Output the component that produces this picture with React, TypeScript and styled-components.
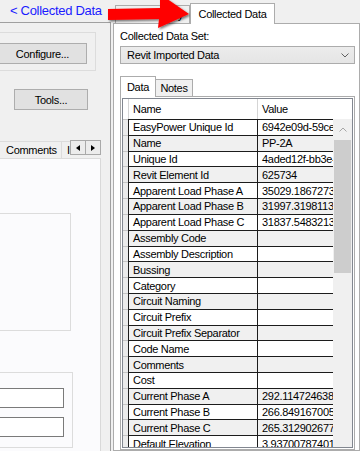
import styled, { createGlobalStyle } from "styled-components";

const GlobalStyle = createGlobalStyle`
  html, body {
    margin: 0;
    padding: 0;
    background: #f0f0f0;
  }
  body {
    font-family: "Liberation Sans", Arial, sans-serif;
    font-size: 11px;
    letter-spacing: -0.3px;
    color: #000;
  }
  * {
    box-sizing: border-box;
  }
`;

const rows: [string, string][] = [
  ["EasyPower Unique Id", "6942e09d-59ce-4a77-b3c1-2f0d5e8c9a11"],
  ["Name", "PP-2A"],
  ["Unique Id", "4aded12f-bb3e-4f07-9c2e-71d0a6e5b3c4"],
  ["Revit Element Id", "625734"],
  ["Apparent Load Phase A", "35029.1867273451"],
  ["Apparent Load Phase B", "31997.3198113207"],
  ["Apparent Load Phase C", "31837.5483213493"],
  ["Assembly Code", ""],
  ["Assembly Description", ""],
  ["Bussing", ""],
  ["Category", ""],
  ["Circuit Naming", ""],
  ["Circuit Prefix", ""],
  ["Circuit Prefix Separator", ""],
  ["Code Name", ""],
  ["Comments", ""],
  ["Cost", ""],
  ["Current Phase A", "292.114724638017"],
  ["Current Phase B", "266.849167005823"],
  ["Current Phase C", "265.312902677441"],
  ["Default Elevation", "3.93700787401575"],
];

function App() {
  return (
    <>
      <GlobalStyle />
      <Screen>
        <LeftPanel>
          <LinkBar>
            <BackLink>&lt; Collected Data</BackLink>
          </LinkBar>
          <LeftBody>
            <GroupBox>
              <Button $width={89} $offset={-1}>
                Configure...
              </Button>
            </GroupBox>
            <Button $width={74} $offset={14} $top={18}>
              Tools...
            </Button>
            <TabStrip>
              <SideTab>Comments</SideTab>
              <PartialTab>Info</PartialTab>
              <ScrollArrows>
                <ArrowButton>
                  <Triangle $dir="left" />
                </ArrowButton>
                <ArrowButton>
                  <Triangle $dir="right" />
                </ArrowButton>
              </ScrollArrows>
            </TabStrip>
            <ContentArea>
              <Frame $top={54} $width={73} $height={118} />
              <Frame $top={41} $width={75}>
                <TextField />
                <TextField />
              </Frame>
            </ContentArea>
          </LeftBody>
        </LeftPanel>

        <RightPanel>
          <OuterTabs>
            <OuterTab>Property</OuterTab>
            <OuterTab $active>Collected Data</OuterTab>
          </OuterTabs>
          <TabPage>
            <FieldLabel>Collected Data Set:</FieldLabel>
            <Combo>
              <span>Revit Imported Data</span>
              <svg width="8" height="5" viewBox="0 0 8 5">
                <path d="M0.5 0.5 L4 4 L7.5 0.5" fill="none" stroke="#606060" strokeWidth="1" />
              </svg>
            </Combo>
            <InnerTabs>
              <InnerTab $active>Data</InnerTab>
              <InnerTab>Notes</InnerTab>
            </InnerTabs>
            <InnerPanel>
              <Grid>
                <HeaderRow>
                  <HeadGutter />
                  <HeadCell $width={129}>Name</HeadCell>
                  <HeadCell $width={76}>Value</HeadCell>
                </HeaderRow>
                <GridBody>
                  <Rows>
                    {rows.map(([name, value], i) => (
                      <Row key={name} $alt={i % 2 === 1}>
                        <RowHead />
                        <Cell $width={129}>{name}</Cell>
                        <Cell $width={76}>{value}</Cell>
                      </Row>
                    ))}
                  </Rows>
                  <ScrollBar>
                    <ScrollUp>
                      <svg width="8" height="5" viewBox="0 0 8 5">
                        <path d="M0.5 4.5 L4 1 L7.5 4.5" fill="none" stroke="#a6a6a6" strokeWidth="1" />
                      </svg>
                    </ScrollUp>
                    <Thumb />
                  </ScrollBar>
                </GridBody>
              </Grid>
            </InnerPanel>
          </TabPage>
        </RightPanel>

        <Callout width="90" height="38" viewBox="104 -6 90 38">
          <defs>
            <filter id="shade" x="-10%" y="-20%" width="130%" height="150%">
              <feDropShadow dx="1.5" dy="1.5" stdDeviation="1.2" floodColor="#000" floodOpacity="0.55" />
            </filter>
          </defs>
          <polygon
            points="108,9 160,8 160,-6 189,14 158,28 159,19 108,20"
            fill="#ff0000"
            filter="url(#shade)"
          />
        </Callout>
      </Screen>
    </>
  );
}
export default App;

const Screen = styled.div`
  position: relative;
  display: flex;
  width: 360px;
  height: 451px;
  overflow: hidden;
  background: #f0f0f0;
`;

/* left side */

const LeftPanel = styled.div`
  display: flex;
  flex-direction: column;
  width: 111px;
  flex: none;
`;

const LinkBar = styled.div`
  height: 22px;
  padding-left: 10px;
  line-height: 22px;
`;

const BackLink = styled.a`
  color: #1a1aff;
  font-size: 13px;
  letter-spacing: -0.3px;
  white-space: nowrap;
  cursor: pointer;
`;

const LeftBody = styled.div`
  flex: 1;
  display: flex;
  flex-direction: column;
  border-top: 1px solid #a0a0a0;
  border-right: 1px solid #a0a0a0;
  min-height: 0;
`;

const GroupBox = styled.div`
  margin: 9px 0 0 -2px;
  width: 98px;
  padding: 10px 0 6px 0;
  border: 1px solid #dcdcdc;
`;

const Button = styled.div<{ $width: number; $offset?: number; $top?: number }>`
  width: ${(p) => p.$width}px;
  height: 21px;
  margin-left: ${(p) => p.$offset ?? 0}px;
  margin-top: ${(p) => p.$top ?? 0}px;
  border: 1px solid #adadad;
  background: #e1e1e1;
  display: flex;
  align-items: center;
  justify-content: center;
  font-size: 11px;
`;

const TabStrip = styled.div`
  display: flex;
  align-items: flex-end;
  height: 18px;
  margin-top: 30px;
`;

const SideTab = styled.div`
  width: 62px;
  height: 17px;
  padding-left: 6px;
  line-height: 16px;
  border-top: 1px solid #dcdcdc;
  border-right: 1px solid #dcdcdc;
  white-space: nowrap;
`;

const PartialTab = styled(SideTab)`
  width: 8px;
  padding-left: 5px;
  overflow: hidden;
  border-right: none;
`;

const ScrollArrows = styled.div`
  display: flex;
  align-self: flex-start;
`;

const ArrowButton = styled.div`
  width: 16px;
  height: 15px;
  margin-right: -1px;
  border: 1px solid #a9a9a9;
  background: #ececec;
  display: flex;
  align-items: center;
  justify-content: center;
`;

const Triangle = styled.span<{ $dir: "left" | "right" }>`
  width: 0;
  height: 0;
  border-top: 3.5px solid transparent;
  border-bottom: 3.5px solid transparent;
  ${(p) =>
    p.$dir === "left"
      ? "border-right: 4px solid #000;"
      : "border-left: 4px solid #000;"}
`;

const ContentArea = styled.div`
  flex: 1;
  width: 101px;
  display: flex;
  flex-direction: column;
  background: #fbfbfd;
  border-top: 1px solid #dcdcdc;
  border-right: 1px solid #d9d9d9;
`;

const Frame = styled.div<{ $top: number; $width: number; $height?: number }>`
  margin: ${(p) => p.$top}px 0 0 -2px;
  width: ${(p) => p.$width}px;
  ${(p) => (p.$height ? `height: ${p.$height}px;` : "")}
  border: 1px solid #dcdcdc;
  padding: 15px 0 10px 0;
  display: flex;
  flex-direction: column;
  gap: 9px;
`;

const TextField = styled.div`
  width: 65px;
  height: 20px;
  border: 1px solid #7a7a7a;
  background: #fff;
`;

/* right side */

const RightPanel = styled.div`
  flex: 1;
  margin-left: 2px;
  display: flex;
  flex-direction: column;
  min-width: 0;
`;

const OuterTabs = styled.div`
  display: flex;
  align-items: flex-end;
  height: 23px;
  padding-left: 2px;
`;

const OuterTab = styled.div<{ $active?: boolean }>`
  position: relative;
  width: ${(p) => (p.$active ? 85 : 75)}px;
  height: ${(p) => (p.$active ? 21 : 18)}px;
  margin-bottom: ${(p) => (p.$active ? -1 : 0)}px;
  z-index: ${(p) => (p.$active ? 1 : 0)};
  padding-right: ${(p) => (p.$active ? 0 : 6)}px;
  border: 1px solid #acacac;
  border-bottom: none;
  background: ${(p) => (p.$active ? "#fff" : "#f0f0f0")};
  display: flex;
  align-items: center;
  justify-content: ${(p) => (p.$active ? "center" : "flex-end")};
  white-space: nowrap;
`;

const TabPage = styled.div`
  flex: 1;
  min-height: 0;
  display: flex;
  flex-direction: column;
  border: 1px solid #acacac;
  background: #fff;
  padding: 0 4px 0 6px;
`;

const FieldLabel = styled.div`
  padding-top: 4px;
  line-height: 16px;
`;

const Combo = styled.div`
  margin-top: 2px;
  height: 18px;
  padding: 0 5px 0 6px;
  border: 1px solid #acacac;
  background: linear-gradient(#ececec, #e5e5e5);
  display: flex;
  align-items: center;
  justify-content: space-between;
`;

const InnerTabs = styled.div`
  display: flex;
  align-items: flex-end;
  height: 20px;
  margin-top: 12px;
`;

const InnerTab = styled.div<{ $active?: boolean }>`
  position: relative;
  width: ${(p) => (p.$active ? 36 : 38)}px;
  height: ${(p) => (p.$active ? 21 : 17)}px;
  margin-bottom: ${(p) => (p.$active ? -1 : 0)}px;
  margin-left: ${(p) => (p.$active ? 0 : -1)}px;
  z-index: ${(p) => (p.$active ? 1 : 0)};
  border: 1px solid #acacac;
  border-bottom: none;
  background: ${(p) => (p.$active ? "#fff" : "#f0f0f0")};
  display: flex;
  align-items: center;
  justify-content: center;
`;

const InnerPanel = styled.div`
  flex: 1;
  min-height: 0;
  display: flex;
  border: 1px solid #acacac;
  padding: 1px;
  background: #fff;
`;

const Grid = styled.div`
  flex: 1;
  display: flex;
  flex-direction: column;
  overflow: hidden;
  border: 1px solid #828790;
  background: #fff;
`;

const HeaderRow = styled.div`
  display: flex;
  height: 20px;
  flex: none;
`;

const HeadGutter = styled.div`
  width: 5px;
`;

const HeadCell = styled.div<{ $width: number }>`
  width: ${(p) => p.$width}px;
  padding-left: 4px;
  border-left: 1px solid #d5d5d5;
  display: flex;
  align-items: center;
`;

const GridBody = styled.div`
  flex: 1;
  display: flex;
  min-height: 0;
`;

const Rows = styled.div`
  width: 210px;
  display: flex;
  flex-direction: column;
`;

const Row = styled.div<{ $alt: boolean }>`
  display: flex;
  height: 15.82px;
  flex: none;
  background: ${(p) => (p.$alt ? "#f0f0f0" : "#fff")};
`;

const RowHead = styled.div`
  width: 5px;
  background: #ebebeb;
  border-top: 1px solid #c4c4c4;
`;

const Cell = styled.div<{ $width: number }>`
  width: ${(p) => p.$width}px;
  padding-left: 4px;
  border-top: 1px solid #1c1c1c;
  border-left: 1px solid #1c1c1c;
  display: flex;
  align-items: center;
  white-space: nowrap;
  overflow: hidden;
`;

const ScrollBar = styled.div`
  flex: 1;
  display: flex;
  flex-direction: column;
  background: #f0f0f0;
`;

const ScrollUp = styled.div`
  height: 21px;
  display: flex;
  align-items: center;
  justify-content: center;
`;

const Thumb = styled.div`
  height: 133px;
  margin: 0 1px 0 1px;
  background: #cdcdcd;
`;

const Callout = styled.svg`
  position: absolute;
  left: 104px;
  top: -6px;
  pointer-events: none;
`;
